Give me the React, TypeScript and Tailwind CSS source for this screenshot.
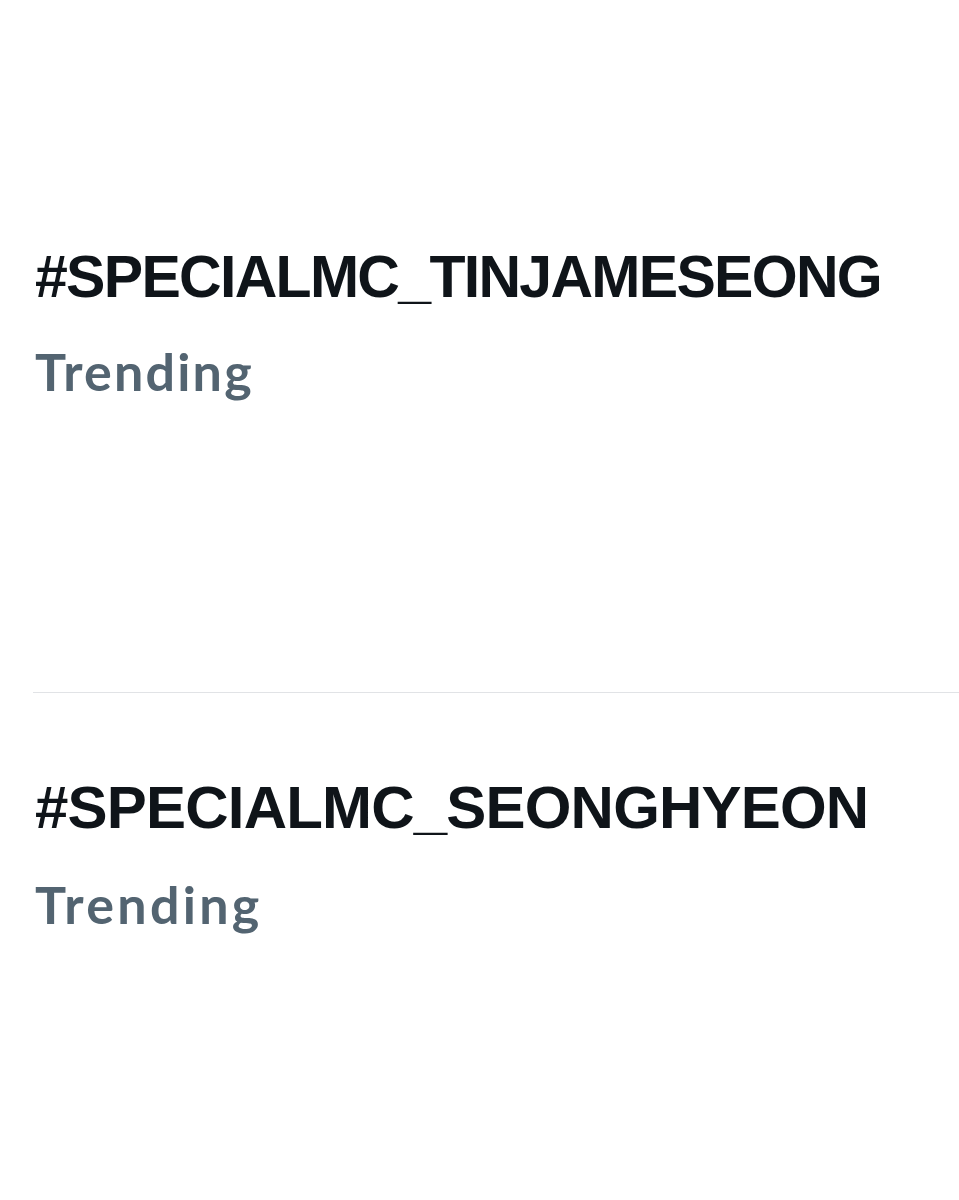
const headFont = { fontFamily: '"Liberation Sans", Arial, sans-serif' };
const subFont = { fontFamily: "Lato, sans-serif" };

export default function App() {
  return (
    <div className="w-[959px] h-[1200px] bg-white overflow-hidden">
      <div className="pt-[248px] pl-[35px]">
        <h2
          className="text-[59px] leading-none font-bold text-[#0f1419] tracking-[-1.7px] whitespace-nowrap"
          style={headFont}
        >
          #SPECIALMC_TINJAMESEONG
        </h2>
        <p
          className="text-[52px] leading-none font-bold text-[#536471] tracking-[2.2px] mt-[38px]"
          style={subFont}
        >
          Trending
        </p>
      </div>
      <div className="ml-[33px] mt-[295px] h-px bg-[#e1e3e6]" />
      <div className="pt-[85px] pl-[35px]">
        <h2
          className="text-[60px] leading-none font-bold text-[#0f1419] tracking-[-0.8px] whitespace-nowrap"
          style={headFont}
        >
          #SPECIALMC_SEONGHYEON
        </h2>
        <p
          className="text-[52px] leading-none font-bold text-[#536471] tracking-[3.3px] mt-[40px]"
          style={subFont}
        >
          Trending
        </p>
      </div>
    </div>
  );
}
